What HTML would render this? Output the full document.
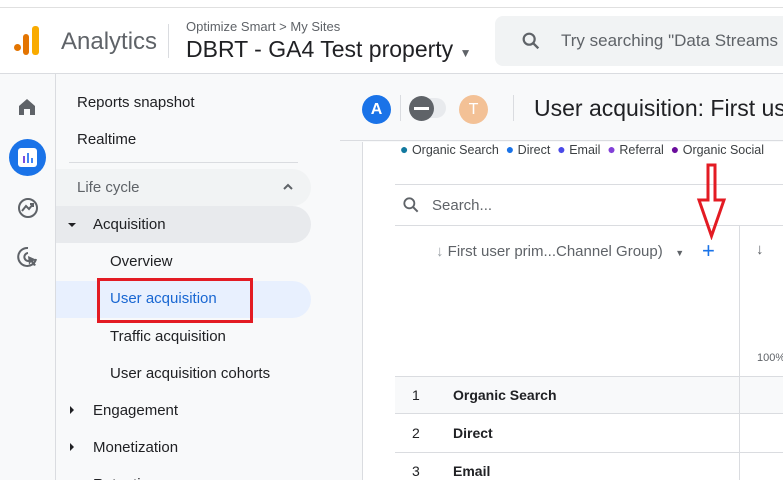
<!DOCTYPE html>
<html><head><meta charset="utf-8"><style>
*{margin:0;padding:0;box-sizing:border-box}
html,body{width:783px;height:480px;overflow:hidden}
body{font-family:"Liberation Sans",sans-serif;background:#f8f9fa;position:relative;color:#202124}
.a{position:absolute}
.nav{font-size:15px;color:#202124;white-space:nowrap}
</style></head><body>
<div class="a" style="left:0;top:0;width:783px;height:8px;background:#fff;border-bottom:1px solid #e0e0e0"></div>
<div class="a" style="left:0;top:8px;width:783px;height:66px;background:#fff;border-bottom:1px solid #dadce0"></div>
<!-- logo -->
<div class="a" style="left:14px;top:44px;width:7px;height:7px;border-radius:50%;background:#e37400"></div>
<div class="a" style="left:23px;top:34px;width:6px;height:21px;border-radius:3px;background:#e37400"></div>
<div class="a" style="left:32px;top:26px;width:7px;height:29px;border-radius:3px;background:#f9ab00"></div>
<div class="a" style="left:61px;top:28px;font-size:24px;color:#5f6368">Analytics</div>
<div class="a" style="left:168px;top:24px;width:1px;height:34px;background:#dadce0"></div>
<div class="a" style="left:186px;top:19px;font-size:13px;color:#5f6368">Optimize Smart &gt; My Sites</div>
<div class="a" style="left:186px;top:36px;font-size:23px;color:#202124;white-space:nowrap">DBRT - GA4 Test property <span style="font-size:12px;color:#5f6368">▼</span></div>
<div class="a" style="left:495px;top:16px;width:300px;height:50px;border-radius:8px;background:#f1f3f4"></div>
<svg class="a" style="left:520px;top:30px" width="22" height="22" viewBox="0 0 24 24"><circle cx="10" cy="10" r="6" fill="none" stroke="#5f6368" stroke-width="2.4"/><path d="M14.5 14.5L20 20" stroke="#5f6368" stroke-width="2.6"/></svg>
<div class="a" style="left:561px;top:31px;font-size:17px;color:#5f6368;white-space:nowrap">Try searching "Data Streams</div>
<!-- left rail -->
<div class="a" style="left:55px;top:74px;width:1px;height:406px;background:#dadce0"></div>
<svg class="a" style="left:17px;top:97px" width="20" height="20" viewBox="0 0 20 20"><path d="M2 9L10 2L18 9V18H13V12H7V18H2Z" fill="#5f6368"/></svg>
<div class="a" style="left:9px;top:139px;width:37px;height:37px;border-radius:50%;background:#1a73e8"></div>
<div class="a" style="left:18px;top:148px;width:19px;height:19px;border-radius:3px;background:#fff"></div>
<div class="a" style="left:23px;top:156px;width:2px;height:7px;background:#7b4de0"></div>
<div class="a" style="left:27px;top:153px;width:2px;height:10px;background:#4285f4"></div>
<div class="a" style="left:31px;top:158px;width:2px;height:5px;background:#4285f4"></div>
<svg class="a" style="left:16px;top:196px" width="24" height="24" viewBox="0 0 24 24"><circle cx="12" cy="12" r="9" fill="none" stroke="#5f6368" stroke-width="2"/><path d="M6 15L10 10L13 13L17 8M14 8H17V11" fill="none" stroke="#5f6368" stroke-width="2"/></svg>
<svg class="a" style="left:16px;top:245px" width="24" height="24" viewBox="0 0 24 24"><path d="M12 3A9 9 0 1 0 20 14" fill="none" stroke="#5f6368" stroke-width="2"/><path d="M12 8A4 4 0 1 0 15 15" fill="none" stroke="#5f6368" stroke-width="2"/><path d="M12 11L21 15L17 16L20 20L18 21L15 17L13 20Z" fill="#5f6368"/></svg>
<!-- nav -->
<div class="a nav" style="left:77px;top:94px">Reports snapshot</div>
<div class="a nav" style="left:77px;top:131px">Realtime</div>
<div class="a" style="left:69px;top:162px;width:229px;height:1px;background:#dadce0"></div>
<div class="a" style="left:56px;top:169px;width:255px;height:37px;border-radius:0 19px 19px 0;background:#f1f3f4"></div>
<div class="a nav" style="left:77px;top:179px;color:#5f6368">Life cycle</div>
<svg class="a" style="left:282px;top:182px" width="12" height="10" viewBox="0 0 12 10"><path d="M2 7L6 3L10 7" fill="none" stroke="#5f6368" stroke-width="2"/></svg>
<div class="a" style="left:56px;top:206px;width:255px;height:37px;border-radius:0 19px 19px 0;background:#e8eaed"></div>
<div class="a" style="left:68px;top:223px;border-left:4px solid transparent;border-right:4px solid transparent;border-top:4px solid #202124"></div>
<div class="a nav" style="left:93px;top:216px">Acquisition</div>
<div class="a nav" style="left:110px;top:253px">Overview</div>
<div class="a" style="left:56px;top:281px;width:255px;height:37px;border-radius:0 19px 19px 0;background:#e8f0fe"></div>
<div class="a nav" style="left:110px;top:290px;color:#1967d2">User acquisition</div>
<div class="a" style="left:97px;top:278px;width:156px;height:45px;border:3px solid #e31b23"></div>
<div class="a nav" style="left:110px;top:328px">Traffic acquisition</div>
<div class="a nav" style="left:110px;top:365px">User acquisition cohorts</div>
<div class="a" style="left:70px;top:406px;border-top:4px solid transparent;border-bottom:4px solid transparent;border-left:4px solid #202124"></div>
<div class="a nav" style="left:93px;top:402px">Engagement</div>
<div class="a" style="left:70px;top:443px;border-top:4px solid transparent;border-bottom:4px solid transparent;border-left:4px solid #202124"></div>
<div class="a nav" style="left:93px;top:439px">Monetization</div>
<div class="a nav" style="left:93px;top:476px">Retention</div>
<!-- main toolbar -->
<div class="a" style="left:340px;top:74px;width:443px;height:67px;background:#f8f9fa;border-bottom:1px solid #dadce0"></div>
<div class="a" style="left:362px;top:95px;width:29px;height:29px;border-radius:50%;background:#1a73e8;color:#fff;font-size:16px;font-weight:bold;text-align:center;line-height:29px">A</div>
<div class="a" style="left:400px;top:95px;width:1px;height:26px;background:#dadce0"></div>
<div class="a" style="left:409px;top:98px;width:37px;height:20px;border-radius:10px;background:#e8eaed"></div>
<div class="a" style="left:409px;top:96px;width:25px;height:25px;border-radius:50%;background:#5f6368"></div>
<div class="a" style="left:414px;top:107px;width:15px;height:3px;background:#fff"></div>
<div class="a" style="left:459px;top:95px;width:29px;height:29px;border-radius:50%;background:#f3c196;color:#fff;font-size:16px;text-align:center;line-height:29px">T</div>
<div class="a" style="left:513px;top:95px;width:1px;height:26px;background:#dadce0"></div>
<div class="a" style="left:534px;top:95px;font-size:23px;white-space:nowrap">User acquisition: First user</div>
<!-- content -->
<div class="a" style="left:362px;top:142px;width:421px;height:338px;background:#fff;border-left:1px solid #dadce0"></div>
<div class="a" style="left:400px;top:141px;font-size:12.5px;color:#3c4043;white-space:nowrap">
<span style="color:#12799f;font-size:14px">●</span> Organic Search &nbsp;<span style="color:#1a73e8;font-size:14px">●</span> Direct &nbsp;<span style="color:#4a4ae8;font-size:14px">●</span> Email &nbsp;<span style="color:#8240d8;font-size:14px">●</span> Referral &nbsp;<span style="color:#6a0d9c;font-size:14px">●</span> Organic Social</div>
<div class="a" style="left:395px;top:184px;width:388px;height:1px;background:#dadce0"></div>
<svg class="a" style="left:401px;top:195px" width="20" height="20" viewBox="0 0 24 24"><circle cx="10" cy="10" r="6" fill="none" stroke="#5f6368" stroke-width="2.2"/><path d="M14.5 14.5L20 20" stroke="#5f6368" stroke-width="2.4"/></svg>
<div class="a" style="left:432px;top:197px;font-size:15px;color:#5f6368">Search...</div>
<div class="a" style="left:395px;top:225px;width:388px;height:1px;background:#dadce0"></div>
<div class="a" style="left:739px;top:225px;width:1px;height:255px;background:#dadce0"></div>
<div class="a" style="left:436px;top:243px;font-size:15px;color:#5f6368;white-space:nowrap"><span style="color:#9aa0a6">↓</span> First user prim...Channel Group) &nbsp;&nbsp;<span style="font-size:9px">▼</span></div>
<div class="a" style="left:702px;top:238px;font-size:22px;color:#1a73e8">+</div>
<div class="a" style="left:756px;top:241px;font-size:15px;color:#5f6368;font-weight:bold">↓</div>
<div class="a" style="left:757px;top:352px;font-size:11px;color:#5f6368">100%</div>
<!-- red arrow -->
<svg class="a" style="left:695px;top:162px" width="34" height="78" viewBox="0 0 34 78"><path d="M13 3H20V38H29L16.5 74L4 38H13Z" fill="none" stroke="#e31b23" stroke-width="3"/></svg>
<div class="a" style="left:395px;top:376px;width:388px;height:38px;background:#f8f9fa;border-top:1px solid #dadce0;border-bottom:1px solid #dadce0"></div>
<div class="a" style="left:739px;top:376px;width:1px;height:104px;background:#dadce0"></div>
<div class="a" style="left:395px;top:452px;width:388px;height:1px;background:#dadce0"></div>
<div class="a" style="left:412px;top:387px;font-size:14px">1</div>
<div class="a" style="left:453px;top:387px;font-size:14px;font-weight:bold">Organic Search</div>
<div class="a" style="left:412px;top:425px;font-size:14px">2</div>
<div class="a" style="left:453px;top:425px;font-size:14px;font-weight:bold">Direct</div>
<div class="a" style="left:412px;top:463px;font-size:14px">3</div>
<div class="a" style="left:453px;top:463px;font-size:14px;font-weight:bold">Email</div>
</body></html>
